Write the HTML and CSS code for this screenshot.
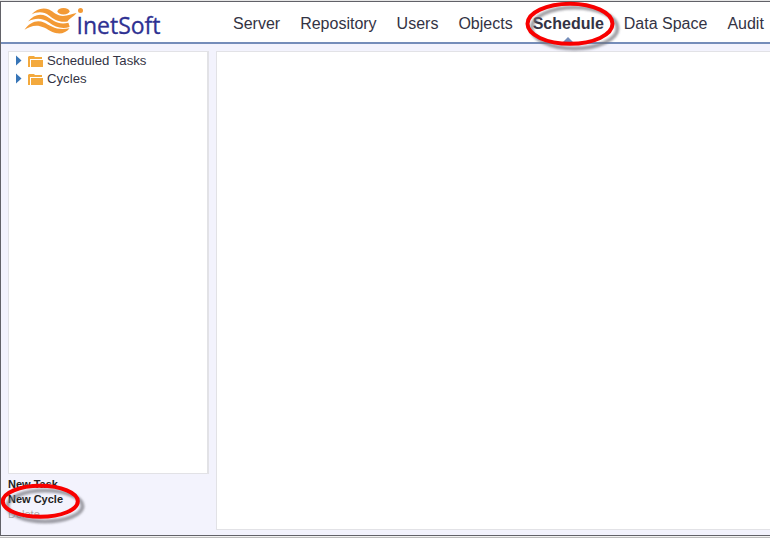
FILE: index.html
```html
<!DOCTYPE html>
<html lang="en">
<head>
<meta charset="utf-8">
<title>InetSoft - Schedule</title>
<link rel="stylesheet" href="styles.css">
</head>
<body>
<div class="app">
  <header class="header">
    <svg class="logo" width="144" height="36" viewBox="20 4 144 36" role="img" aria-label="InetSoft">
      <g fill="#f39a35">
        <ellipse cx="63.500" cy="11.200" rx="6" ry="3.200"/>
        <path d="M31.500 14.500C36 9 43 7 49 9.500C54 12 57 16 63 16C68 16 72 13.500 76.500 13C74 16.500 69 18.500 67.500 21.500C60 23 54 19.500 49 15.500C44 11.500 37 11.500 31.500 14.500Z"/>
        <path d="M28 21.500C33 15 40 13 46 16C53 20 58 25.500 68.500 22.700C68.700 24.500 69.500 25 69.500 27C62 29.500 55 27 49 22.500C42 17.500 35 18 28 21.500Z"/>
        <path d="M24.500 29.800C30 22 37 19.500 44 22.500C51 26 57 31 69.500 28.200C67 32 62 34 57 33.300C50 32.500 47 27.500 40 26.200C34 25 29 27 24.500 29.800Z"/>
        <circle cx="80.500" cy="10.500" r="2.500"/>
      </g>
      <text class="wordmark" x="76.500" y="34" textLength="84" lengthAdjust="spacingAndGlyphs">InetSoft</text>
    </svg>
    <nav class="nav">
      <a>Server</a>
      <a>Repository</a>
      <a>Users</a>
      <a>Objects</a>
      <a class="active">Schedule</a>
      <a>Data Space</a>
      <a>Audit</a>
    </nav>
  </header>
  <main class="workspace">
    <aside class="sidebar">
      <ul class="tree">
        <li>
          <svg class="node-icon" width="32" height="16" viewBox="0 0 32 16"><path fill="#3775b7" d="M1 3.500L6.500 8.500L1 13.500Z"/><path fill="#f3a93d" d="M13 15V5L14 4H19L20 5H27V7H15V15ZM16 8H28V15H16Z"/></svg>
          <span>Scheduled Tasks</span>
        </li>
        <li>
          <svg class="node-icon" width="32" height="16" viewBox="0 0 32 16"><path fill="#3775b7" d="M1 3.500L6.500 8.500L1 13.500Z"/><path fill="#f3a93d" d="M13 15V5L14 4H19L20 5H27V7H15V15ZM16 8H28V15H16Z"/></svg>
          <span>Cycles</span>
        </li>
      </ul>
      <div class="actions">
        <a>New Task</a>
        <a>New Cycle</a>
        <a class="disabled">Delete</a>
      </div>
    </aside>
    <section class="content"></section>
  </main>
</div>
<svg class="highlights" width="770" height="538" viewBox="0 0 770 538">
  <defs><filter id="soft" x="-20%" y="-30%" width="140%" height="170%"><feGaussianBlur stdDeviation="1.300"/></filter></defs>
  <g class="shadow" filter="url(#soft)">
    <ellipse cx="574.500" cy="28" rx="43" ry="20.500"/>
    <ellipse cx="45" cy="506" rx="37.500" ry="15.500"/>
  </g>
  <g class="ring">
    <ellipse cx="570" cy="23.800" rx="42.500" ry="20"/>
    <ellipse cx="40.300" cy="501.300" rx="37.500" ry="15.500"/>
  </g>
</svg>
</body>
</html>
```
FILE: styles.css
```css
* { box-sizing: border-box; }

body {
  margin: 0;
  height: 538px;
  padding-top: 1px;
  overflow: hidden;
  background: #e6e6e6;
  font-family: "Liberation Sans", Arial, sans-serif;
  color: #333344;
}

.app {
  display: flex;
  flex-direction: column;
  height: 535px;
  border: 1px solid #626268;
  border-right: 0;
  background: #f3f3fd;
  box-shadow: 0 1px #f2f2f2, 0 2px #bcbcbc;
}

.header {
  display: flex;
  flex: none;
  height: 42px;
  padding-left: 19px;
  border-bottom: 2px solid #758dba;
  background: #fff;
}

.logo {
  flex: none;
  margin-top: 2px;
}

.wordmark {
  font: 23px "Open Sans", "Noto Sans", sans-serif;
  fill: #2e3192;
  stroke: #2e3192;
  stroke-width: 0.3;
}

.nav {
  display: flex;
  gap: 20px;
  height: 40px;
  margin-left: 69px;
  font-size: 16px;
  line-height: 44px;
  white-space: nowrap;
}

.active {
  position: relative;
  font-weight: bold;
}

.active::after {
  content: "";
  position: absolute;
  left: 50%;
  bottom: 0;
  margin-left: -5px;
  border: 5px solid transparent;
  border-top: 0;
  border-bottom-color: #758dba;
}

.workspace {
  display: flex;
  flex: 1;
  min-height: 0;
  gap: 7px;
  padding: 7px 0 5px 7px;
}

.sidebar {
  display: flex;
  flex: none;
  flex-direction: column;
  width: 201px;
}

.tree {
  height: 423px;
  margin: 0;
  padding: 0 0 0 6px;
  border: 1px solid #e2e2e6;
  border-right-width: 2px;
  background: #fff;
  font-size: 13.2px;
  list-style: none;
}

.tree li {
  display: flex;
  height: 18px;
  line-height: 17px;
}

.node-icon { flex: none; }

.actions {
  display: flex;
  flex-direction: column;
  padding-top: 3px;
  font-size: 11px;
  font-weight: bold;
  line-height: 15px;
  color: #222;
}

.actions .disabled {
  font-weight: normal;
  color: #aaa;
}

.content {
  flex: 1;
  border: 1px solid #e2e2e6;
  border-right: 0;
  background: #fff;
}

.highlights {
  position: absolute;
  top: 0;
  left: 0;
  pointer-events: none;
}

.ring {
  fill: none;
  stroke: #f80000;
  stroke-width: 4;
}

.shadow {
  fill: none;
  stroke: #707078;
  stroke-opacity: 0.65;
  stroke-width: 4;
}
```
